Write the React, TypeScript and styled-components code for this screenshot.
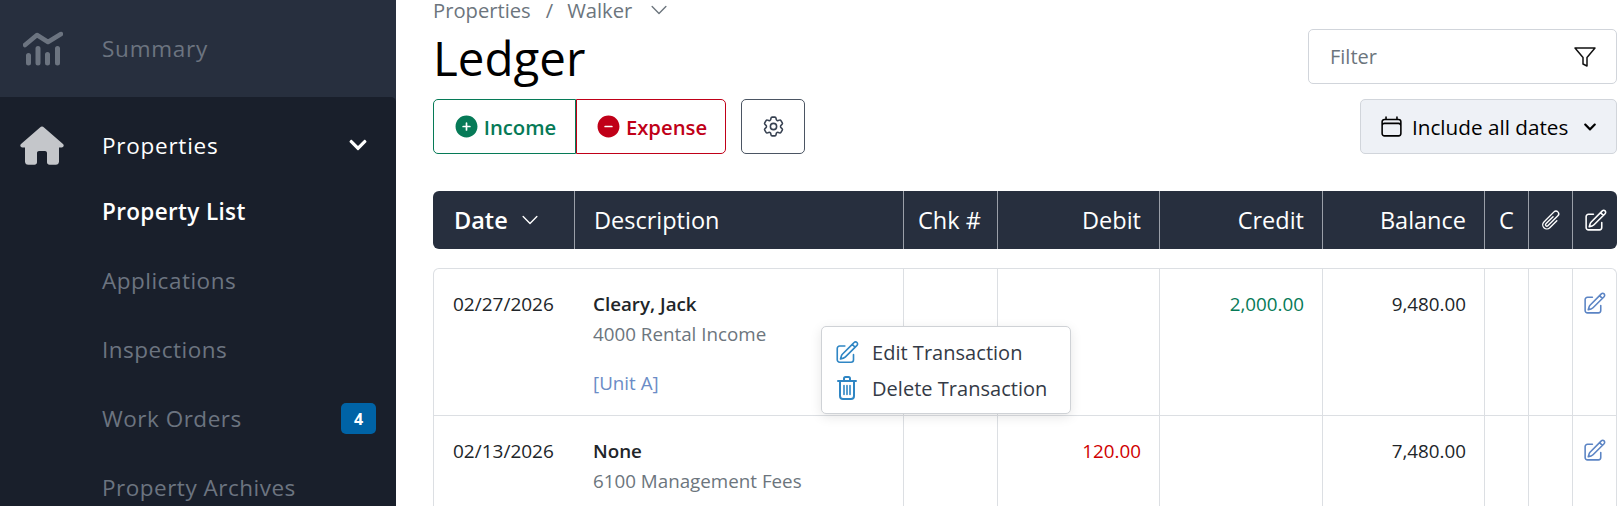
import React from "react";
import styled, { createGlobalStyle } from "styled-components";
import { HiOutlineCog6Tooth, HiOutlinePencilSquare, HiOutlineCalendar, HiOutlinePaperClip, HiPlusCircle, HiMinusCircle, HiChevronDown, HiOutlineChevronDown } from "react-icons/hi2";
import { FiFilter } from "react-icons/fi";
import { FaChevronDown } from "react-icons/fa";

const Global = createGlobalStyle`
  html, body { margin: 0; padding: 0; height: 506px; overflow: hidden; background: #fff; }
  body { font-family: "Open Sans", "Noto Sans", sans-serif; }
`;

const Page = styled.div`
  display: flex;
  width: 1624px;
  height: 506px;
  overflow: hidden;
`;

const Sidebar = styled.aside`
  width: 396px;
  flex: none;
  background: #272f3e;
  display: flex;
  flex-direction: column;
`;

const SummaryRow = styled.div`
  height: 97px;
  flex: none;
  display: flex;
  align-items: center;
  padding-left: 23px;
  color: #6c7480;
`;

const SideGroup = styled.div`
  flex: 1;
  background: #191f2b;
  border-top-right-radius: 5px;
  padding-top: 16px;
`;

const TopRow = styled.div`
  height: 64px;
  display: flex;
  align-items: center;
  padding: 0 28px 0 20px;
  color: #fff;
`;

const TopIconSlot = styled.span`
  width: 82px;
  flex: none;
  display: flex;
  color: #c4c6ca;
`;

const SummarySlot = styled.span`
  width: 79px;
  flex: none;
  display: flex;
`;

const TopLabel = styled.span`
  flex: 1;
  font-size: 22.5px;
  letter-spacing: 0.75px;
`;

const SubItem = styled.div<{ $active?: boolean }>`
  height: 69px;
  display: flex;
  align-items: center;
  padding: 0 20px 0 102px;
  font-size: 22.5px;
  letter-spacing: ${(p) => (p.$active ? "0.35px" : "0.5px")};
  font-weight: ${(p) => (p.$active ? 600 : 400)};
  color: ${(p) => (p.$active ? "#fff" : "#6c7480")};
  justify-content: space-between;
`;

const Badge = styled.span`
  width: 35px;
  height: 31px;
  border-radius: 5px;
  background: #0063a6;
  color: #fff;
  font-size: 16px;
  font-weight: 700;
  letter-spacing: 0;
  display: flex;
  align-items: center;
  justify-content: center;
`;

const Main = styled.main`
  flex: 1;
  position: relative;
  padding: 0 7px 0 37px;
  min-width: 0;
`;

const Crumbs = styled.div`
  height: 20px;
  line-height: 20px;
  margin-bottom: 2px;
  display: flex;
  align-items: center;
  color: #6c757d;
  font-size: 20.2px;
`;

const CrumbSep = styled.span`
  margin: 0 14px 0 15px;
`;

const CrumbCaret = styled.span`
  display: flex;
  margin-left: 16px;
`;

const Toolbar = styled.div`
  display: flex;
  justify-content: space-between;
`;

const LeftTools = styled.div`
  display: flex;
  flex-direction: column;
`;

const RightTools = styled.div`
  display: flex;
  flex-direction: column;
  align-items: flex-end;
  padding-top: 7px;
  gap: 15px;
`;

const Title = styled.h1`
  margin: 0;
  height: 77px;
  font-size: 47.5px;
  font-weight: 400;
  line-height: 72px;
  color: #000;
`;

const ActionRow = styled.div`
  display: flex;
  gap: 15px;
`;

const Split = styled.div`
  display: flex;
`;

const TxButton = styled.button<{ $tone: string; $w: number; $side: "l" | "r" }>`
  width: ${(p) => p.$w}px;
  height: 55px;
  background: #fff;
  border: 1px solid ${(p) => p.$tone};
  color: ${(p) => p.$tone};
  border-radius: ${(p) => (p.$side === "l" ? "5px 0 0 5px" : "0 5px 5px 0")};
  font: 600 20.3px "Open Sans", sans-serif;
  display: flex;
  align-items: center;
  justify-content: center;
  gap: 4px;
  padding: 0;
`;

const GearButton = styled.button`
  width: 64px;
  height: 55px;
  background: #fff;
  border: 1px solid #4b5563;
  border-radius: 5px;
  color: #374151;
  display: flex;
  align-items: center;
  justify-content: center;
  padding: 0;
`;

const FilterBox = styled.div`
  width: 309px;
  height: 55px;
  box-sizing: border-box;
  border: 1px solid #d1d5db;
  border-radius: 5px;
  display: flex;
  align-items: center;
  justify-content: space-between;
  padding: 0 19px 0 21px;
  color: #6c757d;
  font-size: 20px;
`;

const DateButton = styled.button`
  width: 257px;
  height: 55px;
  box-sizing: border-box;
  border: 1px solid #d1d5db;
  border-radius: 5px;
  background: #eef1f6;
  color: #000;
  display: flex;
  align-items: center;
  gap: 8px;
  padding: 0 18px;
  font: 400 20.7px "Open Sans", sans-serif;
  white-space: nowrap;
`;

const DateCaret = styled.span`
  display: flex;
  margin-left: 7px;
`;

const HeadRow = styled.div`
  margin-top: 37px;
  display: grid;
  grid-template-columns: 142px 329px 94px 162px 163px 162px 44px 44px 44px;
  height: 58px;
  background: #272f3e;
  border-radius: 6px;
  color: #fff;
  font-size: 23.5px;
`;

const HeadCell = styled.div<{ $right?: boolean; $center?: boolean; $bold?: boolean; $last?: boolean; $left?: number }>`
  display: flex;
  align-items: center;
  justify-content: ${(p) => (p.$right ? "flex-end" : p.$center ? "center" : "flex-start")};
  padding: ${(p) => (p.$center ? "0" : `0 18px 0 ${p.$left ?? 21}px`)};
  border-right: ${(p) => (p.$last ? "none" : "1px solid #9a9fa8")};
  box-sizing: border-box;
  font-weight: ${(p) => (p.$bold ? 600 : 400)};
  gap: 11px;
  white-space: nowrap;
`;

const Body = styled.div`
  margin-top: 19px;
  border: 1px solid #dcdfe3;
  border-bottom: none;
  border-radius: 6px 6px 0 0;
  box-sizing: border-box;
`;

const Row = styled.div<{ $h: number }>`
  display: grid;
  grid-template-columns: 141px 329px 94px 162px 163px 162px 44px 44px 43px;
  height: ${(p) => p.$h}px;
  box-sizing: border-box;
  & + & {
    border-top: 1px solid #dcdfe3;
  }
`;

const Cell = styled.div<{ $right?: boolean; $color?: string; $last?: boolean }>`
  padding: 22px 18px 0 18px;
  font-size: 18.8px;
  line-height: 26px;
  color: ${(p) => p.$color || "#212529"};
  text-align: ${(p) => (p.$right ? "right" : "left")};
  border-right: ${(p) => (p.$last ? "none" : "1px solid #dcdfe3")};
  box-sizing: border-box;
  white-space: nowrap;
`;

const DateCell = styled(Cell)`
  border-right: none;
  padding-left: 19px;
  font-size: 19px;
`;

const IconCell = styled(Cell)`
  padding: 22px 0 0 9px;
  color: #5b84c4;
  display: flex;
  align-items: flex-start;
`;

const Payee = styled.div`
  font-weight: 600;
`;

const Account = styled.div`
  color: #6c757d;
  margin-top: 4px;
`;

const UnitLink = styled.div`
  color: #6b8cc6;
  margin-top: 23px;
`;

const Menu = styled.div`
  position: absolute;
  left: 425px;
  top: 326px;
  width: 250px;
  height: 88px;
  box-sizing: border-box;
  background: #fff;
  border: 1px solid #cfd2d6;
  border-radius: 5px;
  box-shadow: 0 3px 12px rgba(0, 0, 0, 0.1);
  padding: 7px 12px;
  display: flex;
  flex-direction: column;
`;

const MenuItem = styled.div`
  height: 37px;
  display: flex;
  align-items: center;
  gap: 12px;
  font-size: 20px;
  letter-spacing: 0.03px;
  color: #343a46;
  white-space: nowrap;
`;

const MenuIcon = styled.span`
  display: flex;
  justify-content: center;
  width: 26px;
  color: #2f86c4;
  flex: none;
`;

function SummaryIcon() {
  return (
    <svg width="40" height="35" viewBox="0 0 40 35" fill="none" stroke="currentColor" strokeLinecap="round">
      <path d="M2 14 L14 4 L25 11 L38 3" strokeWidth="4.5" strokeLinejoin="round" />
      <path d="M5.5 24.5V32M15 17.5V32M24.5 23.5V32M34.5 17.5V32" strokeWidth="5" />
    </svg>
  );
}

function HomeIcon() {
  return (
    <svg width="44" height="39" viewBox="0 0 44 39" fill="currentColor">
      <path
        d="M22 0.5 C22.8 0.5 23.4 0.9 24 1.4 L43 18 C44.4 19.4 43.6 21.5 41.6 21.5 H39 V35.5 C39 37.5 37.7 38.8 35.7 38.8 H29.5 C28 38.8 27 37.8 27 36.3 V27 C27 25.9 26.1 25 25 25 H19 C17.9 25 17 25.9 17 27 V36.3 C17 37.8 16 38.8 14.5 38.8 H8.3 C6.3 38.8 5 37.5 5 35.5 V21.5 H2.4 C0.4 21.5 -0.4 19.4 1 18 L20 1.4 C20.6 0.9 21.2 0.5 22 0.5 Z"
      />
    </svg>
  );
}

function TrashIcon() {
  return (
    <svg width="20" height="24" viewBox="0 0 20 24" fill="none" stroke="currentColor" strokeWidth="2" strokeLinecap="round" strokeLinejoin="round">
      <path d="M1 5h18M7 4.5V2.5C7 1.7 7.7 1 8.5 1h3C12.3 1 13 1.7 13 2.5v2" />
      <path d="M3 5.5V20c0 1.7 1.3 3 3 3h8c1.7 0 3-1.3 3-3V5.5" />
      <path d="M7 9.5v9M10 9.5v9M13 9.5v9" strokeWidth="1.6" />
    </svg>
  );
}

function LedgerRow({ h, date, payee, account, unit, debit, credit, balance }: { h: number; date: string; payee: string; account: string; unit?: string; debit?: string; credit?: string; balance: string }) {
  return (
    <Row $h={h}>
      <DateCell>{date}</DateCell>
      <Cell>
        <Payee>{payee}</Payee>
        <Account>{account}</Account>
        {unit && <UnitLink>{unit}</UnitLink>}
      </Cell>
      <Cell />
      <Cell $right $color="#d00000">{debit}</Cell>
      <Cell $right $color="#067a57">{credit}</Cell>
      <Cell $right>{balance}</Cell>
      <Cell />
      <Cell />
      <IconCell $last><HiOutlinePencilSquare size={25} /></IconCell>
    </Row>
  );
}

export default function App() {
  return (
    <Page>
      <Global />
      <Sidebar>
        <SummaryRow>
          <SummarySlot><SummaryIcon /></SummarySlot>
          <TopLabel>Summary</TopLabel>
        </SummaryRow>
        <SideGroup>
          <TopRow>
            <TopIconSlot><HomeIcon /></TopIconSlot>
            <TopLabel>Properties</TopLabel>
            <FaChevronDown size={20} />
          </TopRow>
          <SubItem $active>Property List</SubItem>
          <SubItem>Applications</SubItem>
          <SubItem>Inspections</SubItem>
          <SubItem>Work Orders<Badge>4</Badge></SubItem>
          <SubItem>Property Archives</SubItem>
        </SideGroup>
      </Sidebar>
      <Main>
        <Crumbs>
          <span>Properties</span><CrumbSep>/</CrumbSep><span>Walker</span>
          <CrumbCaret><HiChevronDown size={22} /></CrumbCaret>
        </Crumbs>
        <Toolbar>
          <LeftTools>
            <Title>Ledger</Title>
            <ActionRow>
              <Split>
                <TxButton $tone="#067a57" $w={143} $side="l"><HiPlusCircle size={27} />Income</TxButton>
                <TxButton $tone="#c00018" $w={150} $side="r"><HiMinusCircle size={27} />Expense</TxButton>
              </Split>
              <GearButton aria-label="Settings"><HiOutlineCog6Tooth size={25} /></GearButton>
            </ActionRow>
          </LeftTools>
          <RightTools>
            <FilterBox>Filter<FiFilter size={24} color="#111" strokeWidth={1.5} /></FilterBox>
            <DateButton><HiOutlineCalendar size={25} />Include all dates<DateCaret><FaChevronDown size={14} /></DateCaret></DateButton>
          </RightTools>
        </Toolbar>
        <HeadRow>
          <HeadCell $bold>Date<HiOutlineChevronDown size={22} /></HeadCell>
          <HeadCell $left={19}>Description</HeadCell>
          <HeadCell $left={14}>Chk #</HeadCell>
          <HeadCell $right>Debit</HeadCell>
          <HeadCell $right>Credit</HeadCell>
          <HeadCell $right>Balance</HeadCell>
          <HeadCell $center>C</HeadCell>
          <HeadCell $center><HiOutlinePaperClip size={22} /></HeadCell>
          <HeadCell $center $last><HiOutlinePencilSquare size={25} /></HeadCell>
        </HeadRow>
        <Body>
          <LedgerRow h={146} date="02/27/2026" payee="Cleary, Jack" account="4000 Rental Income" unit="[Unit A]" credit="2,000.00" balance="9,480.00" />
          <LedgerRow h={147} date="02/13/2026" payee="None" account="6100 Management Fees" debit="120.00" balance="7,480.00" />
        </Body>
        <Menu>
          <MenuItem><MenuIcon><HiOutlinePencilSquare size={27} /></MenuIcon>Edit Transaction</MenuItem>
          <MenuItem><MenuIcon><TrashIcon /></MenuIcon>Delete Transaction</MenuItem>
        </Menu>
      </Main>
    </Page>
  );
}
